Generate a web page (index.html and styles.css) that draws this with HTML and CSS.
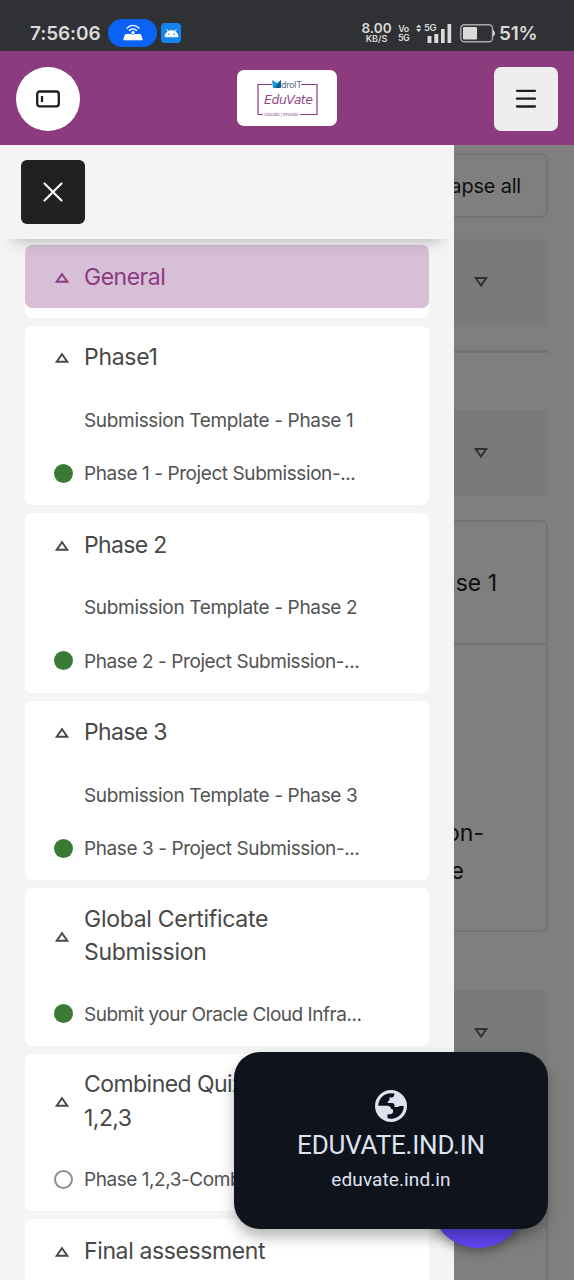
FILE: index.html
```html
<!DOCTYPE html>
<html lang="en">
<head>
<meta charset="utf-8">
<title>EduVate</title>
<link rel="stylesheet" href="styles.css">
</head>
<body>
<div class="phone">
  <div class="status">
    <span class="time">7:56:06</span>
    <span class="cast"><svg width="22" height="18" viewBox="0 0 22 18"><path d="M3.500 10.500h15l1.800 5.300H1.700z" fill="#fff" stroke="#fff" stroke-linejoin="round"/><path d="M4.500 4.400Q11-1.600 17.500 4.400M7 6.700Q11 3 15 6.700" fill="none" stroke="#fff" stroke-width="1.300"/><circle cx="11" cy="8.700" r="1.900" fill="#fff" stroke="#0a63f5" stroke-width=".6"/></svg></span>
    <span class="droid"><svg width="15" height="10" viewBox="0 0 15 10"><path d="M1 8.800a6.500 6.300 0 0 1 13 0zM4.500 4L2.500 1M10.500 4l2-3" fill="#fff" stroke="#fff" stroke-width=".8"/><circle cx="4.800" cy="6.200" r=".8" fill="#1583ee"/><circle cx="10.200" cy="6.200" r=".8" fill="#1583ee"/></svg></span>
    <span class="stack speed"><b>8.00</b><i>KB/S</i></span>
    <span class="stack vo"><b>Vo</b><i>5G</i></span>
    <span class="signal"><span class="fiveg">5G</span><svg width="36" height="21" viewBox="0 0 36 21"><path d="M0 4.500L2.700 1.500 5.400 4.500zM0 6L2.700 9 5.400 6z" fill="#dadada"/><path d="M11.500 13v7h4v-7zM18.300 11v9h4v-9zM25 6v14h3.700V6zM31.500 1v19h3.700V1z" fill="#dadada"/></svg></span>
    <svg class="battery" width="36" height="19" viewBox="0 0 36 19"><rect x=".8" y=".8" width="31.700" height="17" rx="3.500" fill="none" stroke="#a9a9aa" stroke-width="1.400"/><rect x="3" y="3" width="14" height="12.600" rx="1" fill="#dadada"/><path d="M33.500 6.500q2 2.800 0 5.600z" fill="#dadada" stroke="#dadada"/></svg>
    <span class="percent">51%</span>
  </div>
  <header class="topbar">
    <button class="round"><svg width="24" height="18" viewBox="0 0 24 18"><rect x="1.200" y="1.500" width="21.600" height="14.800" rx="2.500" fill="none" stroke="#1d1d1d" stroke-width="2.300"/><path d="M6 6v6" stroke="#1d1d1d" stroke-width="2.200"/></svg></button>
    <div class="logo"><svg width="100" height="56" viewBox="0 0 100 56"><path d="M35 14.500H21V44.500H26M64 14.500H80V44.500H63" fill="none" stroke="#8b3b7e" stroke-width="1.200"/><path d="M35 10l5 3 4-3v8H36z" fill="#1598d5"/><path d="M38 18l6-8v8z" fill="#075e9b"/><text x="44" y="18" class="brand" textLength="21">droIT</text><text x="27" y="33.500" class="edu" textLength="49">EduVate</text><text x="27.500" y="46" class="tag" textLength="34">Educate | Innovate</text></svg></div>
    <button class="menu"><svg width="22" height="20" viewBox="0 0 22 20"><path d="M2 1.800h18M2 9.700h18M2 17.500h18" stroke="#1d1d1d" stroke-width="2.300" stroke-linecap="round"/></svg></button>
  </header>
  <div class="stage">
    <main class="course">
      <div class="collapse">Collapse all</div>
      <section class="bar"><svg class="tri" width="14" height="12" viewBox="0 0 14 12"><path d="M1.700 2h10.600L7 9.500z"/></svg></section>
      <hr>
      <section class="bar second"><svg class="tri" width="14" height="12" viewBox="0 0 14 12"><path d="M1.700 2h10.600L7 9.500z"/></svg></section>
      <section class="activity">
        <div class="activity-head">Phase 1</div>
        <div class="activity-body"><span>Submission-</span><span class="last">e</span></div>
      </section>
      <section class="bar third"><svg class="tri" width="14" height="12" viewBox="0 0 14 12"><path d="M1.700 2h10.600L7 9.500z"/></svg></section>
      <section class="activity next"><div class="activity-head"></div></section>
    </main>
    <div class="backdrop"></div>
    <aside class="drawer">
      <div class="drawer-head"><button class="close"><svg width="22" height="22" viewBox="0 0 22 22"><path d="M2.500 2.500l17 17M19.500 2.500l-17 17" stroke="#fff" stroke-width="2.100" stroke-linecap="round"/></svg></button></div>
      <nav class="list">
        <div class="card"><div class="title active"><svg class="tri" width="14" height="12" viewBox="0 0 14 12"><path d="M1.700 9.700h10.600L7 2.200z"/></svg><span class="general">General</span></div></div>
        <div class="card"><div class="title"><svg class="tri" width="14" height="12" viewBox="0 0 14 12"><path d="M1.700 9.700h10.600L7 2.200z"/></svg><span class="p1">Phase1</span></div>
          <div class="item"><i></i><span class="tmpl">Submission Template - Phase 1</span></div>
          <div class="item"><i class="done"></i><span class="proj">Phase 1 - Project Submission-...</span></div></div>
        <div class="card"><div class="title"><svg class="tri" width="14" height="12" viewBox="0 0 14 12"><path d="M1.700 9.700h10.600L7 2.200z"/></svg><span class="phase">Phase 2</span></div>
          <div class="item"><i></i><span class="tmpl">Submission Template - Phase 2</span></div>
          <div class="item"><i class="done"></i><span class="proj">Phase 2 - Project Submission-...</span></div></div>
        <div class="card"><div class="title"><svg class="tri" width="14" height="12" viewBox="0 0 14 12"><path d="M1.700 9.700h10.600L7 2.200z"/></svg><span class="phase">Phase 3</span></div>
          <div class="item"><i></i><span class="tmpl">Submission Template - Phase 3</span></div>
          <div class="item"><i class="done"></i><span class="proj">Phase 3 - Project Submission-...</span></div></div>
        <div class="card"><div class="title"><svg class="tri" width="14" height="12" viewBox="0 0 14 12"><path d="M1.700 9.700h10.600L7 2.200z"/></svg><span class="global">Global Certificate<br>Submission</span></div>
          <div class="item"><i class="done"></i><span class="oracle">Submit your Oracle Cloud Infra...</span></div></div>
        <div class="card"><div class="title"><svg class="tri" width="14" height="12" viewBox="0 0 14 12"><path d="M1.700 9.700h10.600L7 2.200z"/></svg><span class="quiz">Combined Quiz<br>1,2,3</span></div>
          <div class="item"><i class="todo"></i><span class="comb">Phase 1,2,3-Comb</span></div></div>
        <div class="card"><div class="title"><svg class="tri" width="14" height="12" viewBox="0 0 14 12"><path d="M1.700 9.700h10.600L7 2.200z"/></svg><span class="final">Final assessment</span></div><div class="item"></div></div>
      </nav>
    </aside>
  </div>
  <div class="fab"></div>
  <div class="toast">
    <svg width="32" height="32" viewBox="0 0 32 32"><circle cx="16" cy="16" r="16" fill="#dee2f1"/><path d="M3.200 15.800A12.800 12.800 0 0 1 19.300 3.600V4.800Q19 7.500 16.500 7.500H14.500V9.500Q14.500 11 12.800 11.300V13H17Q19.500 13 19.500 15.500V17H22Q24 17 24.500 16H28.800A12.800 12.800 0 0 1 12.500 28.300V24.300H15Q18 24.300 18 21.500V19.500Q16 19.500 15.500 17.500 15 15.800 12.500 15.800z" fill="#0f131c"/></svg>
    <div class="toast-title">EDUVATE.IND.IN</div>
    <div class="toast-url">eduvate.ind.in</div>
  </div>
</div>
</body>
</html>
```
FILE: styles.css
```css
* { box-sizing: border-box; }
body { margin: 0; font-family: Inter, "Liberation Sans", sans-serif; color: #484848; }
button { border: 0; padding: 0; display: flex; align-items: center; justify-content: center; }
svg { display: block; flex: none; }
i, b { font-style: normal; font-weight: inherit; }
.phone { position: relative; width: 574px; height: 1280px; overflow: hidden; display: flex; flex-direction: column; }
.status { height: 51px; flex: none; background: #303134; color: #dadada; display: flex; align-items: center; padding: 15px 0 0 30px; white-space: nowrap; font-weight: 600; }
.time { font-size: 19px; width: 78px; letter-spacing: -.1px; }
.cast { width: 49px; height: 28px; border-radius: 14px; background: #0a63f5; display: flex; align-items: center; justify-content: center; }
.droid { width: 20px; height: 20px; border-radius: 4px; background: #1583ee; margin-left: 4px; display: flex; align-items: center; justify-content: center; }
.stack { display: flex; flex-direction: column; align-items: center; }
.speed { width: 31px; margin-left: 180px; }
.speed b { font-size: 13.500px; line-height: 12px; margin-top: -2px; }
.speed i { font-size: 9px; line-height: 9px; }
.vo { width: 11px; margin-left: 6px; font-size: 9px; line-height: 9.500px; letter-spacing: -.6px; }
.signal { position: relative; margin-left: 7px; }
.fiveg { position: absolute; left: 8px; top: 0; font-size: 9.500px; line-height: 9px; letter-spacing: -.4px; }
.battery { margin-left: 8px; }
.percent { font-size: 19px; margin-left: 3px; letter-spacing: -.3px; }
.topbar { height: 94px; flex: none; background: #8b3b7e; display: flex; align-items: center; justify-content: space-between; padding: 1px 16px 0; }
.round { width: 64px; height: 64px; border-radius: 50%; background: #fff; }
.logo { width: 100px; height: 56px; border-radius: 7px; background: #fff; margin-bottom: 2px; }
.brand { font: 9px Inter, sans-serif; fill: #5c6a90; }
.edu { font: italic 12.500px "DejaVu Sans", sans-serif; fill: #944a88; }
.tag { font: 4px Inter, sans-serif; fill: #944a88; }
.menu { width: 64px; height: 64px; border-radius: 7px; background: #eee; }
.stage { position: relative; flex: 1; overflow: hidden; background: #fff; }
.course { padding: 8px 26px 0; color: #1d1d1d; }
.tri { fill: none; stroke: currentColor; stroke-width: 1.900; stroke-linejoin: miter; }
.collapse { height: 65px; margin-left: 250px; border: 2px solid #e9e9e9; border-radius: 7px; font-size: 20px; letter-spacing: -.2px; display: flex; align-items: center; justify-content: flex-end; padding-right: 25px; }
.bar { height: 86px; margin-top: 21px; background: #f4f4f4; border-radius: 7px; color: #606060; display: flex; align-items: center; justify-content: flex-end; padding-right: 60px; }
hr { border: 0; height: 3px; background: #e8e8e8; margin: 25px 0 57px; }
.bar.second { margin-top: 0; }
.activity { margin-top: 24px; height: 412px; border: 2px solid #e8e8e8; border-radius: 7px; font-size: 23px; }
.activity-head { height: 123px; border-bottom: 2px solid #e8e8e8; text-align: right; padding: 42px 49px 0 0; line-height: 38px; }
.activity-body { display: flex; flex-direction: column; align-items: flex-end; padding: 169px 62px 0 0; line-height: 38px; }
.last { margin-right: 20px; }
.bar.third { margin-top: 58px; }
.backdrop { position: absolute; inset: 0; background: rgba(0,0,0,.5); }
.drawer { position: absolute; left: 0; top: 0; bottom: 0; width: 454px; background: #f4f4f4; overflow: hidden; }
.drawer-head { position: relative; z-index: 1; height: 94px; padding: 15px 21px; background: #f4f4f4; box-shadow: 0 16px 14px -14px rgba(0,0,0,.26); }
.close { width: 64px; height: 64px; border-radius: 6px; background: #212121; }
.list { padding: 6px 25px 0; display: flex; flex-direction: column; gap: 8px; }
.card { background: #fff; border-radius: 7px; padding-bottom: 5px; }
.title { min-height: 62.500px; margin-bottom: 5px; padding: 13.500px 0 13.500px 30px; border-radius: 7px; display: flex; align-items: center; gap: 15px; font-size: 23px; line-height: 33.500px; }
.title .tri { margin-top: 3px; }
.title span { padding-top: 1px; margin-bottom: -1px; }
.title.active { background: #d7bfd8; color: #8b3b7e; }
.item { height: 53.500px; padding-left: 29px; display: flex; align-items: center; gap: 11px; font-size: 19px; white-space: nowrap; color: #525252; }
.item span { padding-top: 1px; }
.item i { width: 19px; height: 19px; border-radius: 50%; }
.item .done { background: #397b34; }
.item .todo { border: 2.500px solid #8f8f8f; }
.general { letter-spacing: -.5px; }
.p1 { letter-spacing: -.3px; }
.phase { letter-spacing: -.65px; }
.global { letter-spacing: -.28px; }
.quiz { letter-spacing: -.55px; }
.final { letter-spacing: -.38px; }
.tmpl { letter-spacing: -.33px; }
.proj { letter-spacing: -.42px; }
.oracle { letter-spacing: -.48px; }
.comb { letter-spacing: -.45px; }
.fab { position: absolute; left: 430px; top: 1152px; width: 96px; height: 96px; border-radius: 50%; background: #6146f2; box-shadow: 0 3px 12px rgba(0,0,0,.4); }
.toast { position: absolute; left: 234px; top: 1052px; width: 314px; height: 177px; border-radius: 26px; background: #0f131c; box-shadow: 0 8px 14px rgba(0,0,0,.28); display: flex; flex-direction: column; align-items: center; padding-top: 38px; color: #dee2f1; font-family: Roboto, sans-serif; }
.toast-title { font-size: 26px; line-height: 34px; margin-top: 6px; letter-spacing: -.2px; }
.toast-url { font-size: 19px; line-height: 26px; margin-top: 5px; letter-spacing: .1px; }
```
